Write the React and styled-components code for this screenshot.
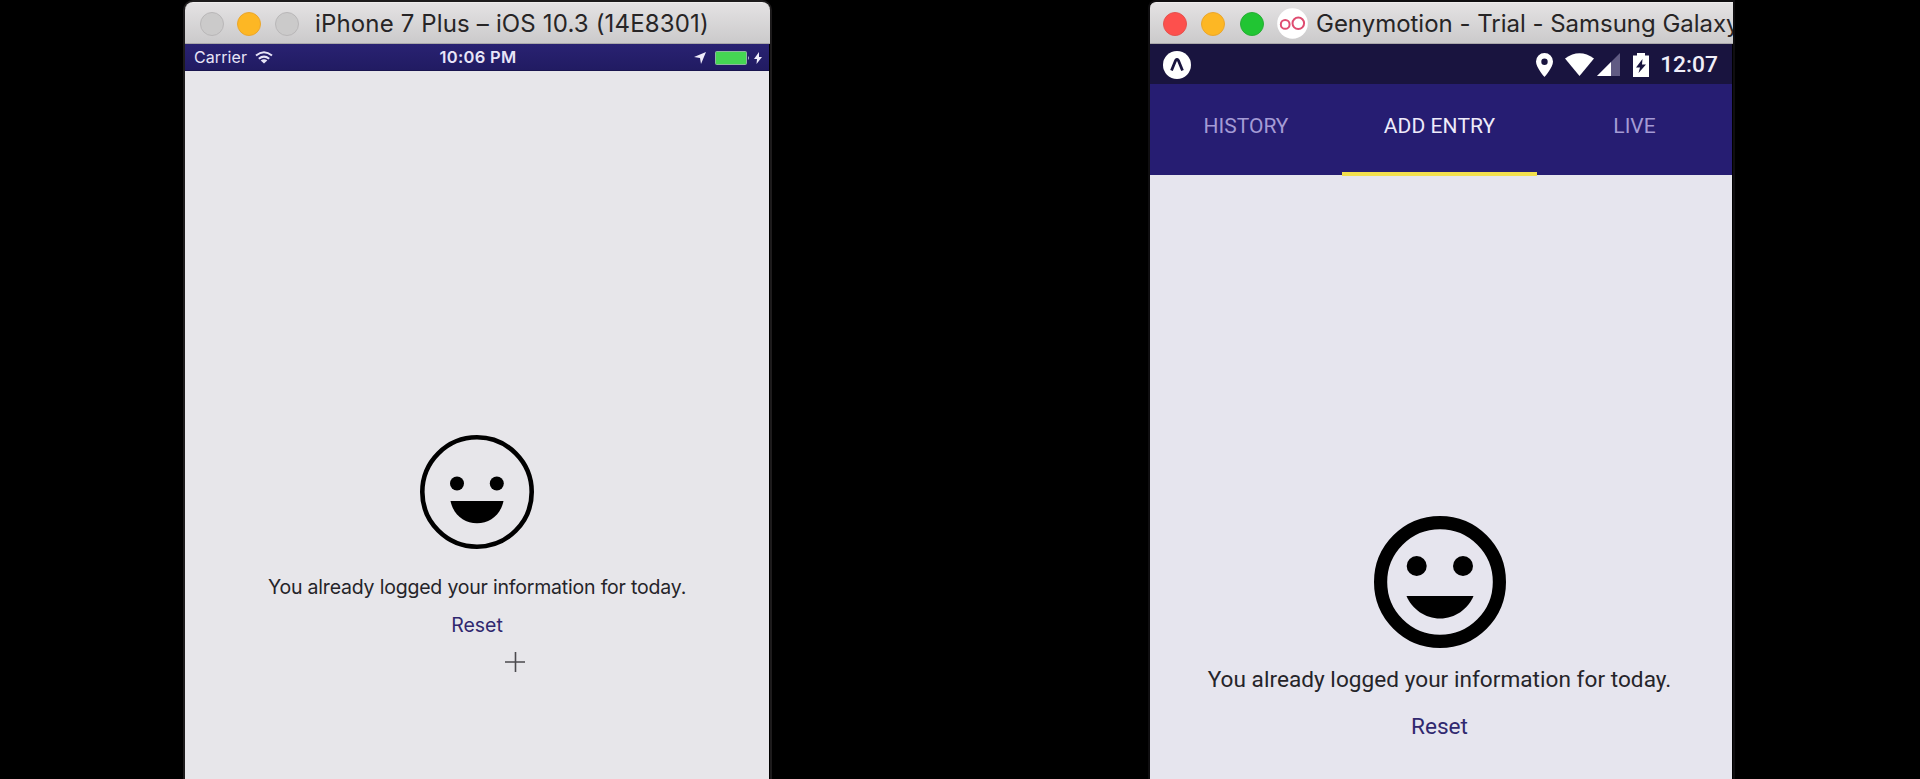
import React from "react";
import styled, { createGlobalStyle } from "styled-components";

const Global = createGlobalStyle`
  * { box-sizing: border-box; }
  html, body { margin: 0; background: #000; overflow: hidden; }
`;

const Desktop = styled.main`
  display: flex;
  align-items: stretch;
  gap: 380px;
  width: 1920px;
  height: 779px;
  padding: 2px 0 0 185px;
  overflow: hidden;
  background: #000;
`;

const Window = styled.section`
  display: flex;
  flex-direction: column;
  flex: none;
  width: ${(p) => p.$width}px;
  border-radius: ${(p) => p.$radius};
  font-family: ${(p) => p.$font};
  box-shadow: 0 0 0 2px ${(p) => p.$shadow};
`;

const TitleBar = styled.header`
  display: flex;
  align-items: center;
  flex: none;
  height: ${(p) => p.$height}px;
  padding-top: 1px;
  padding-left: ${(p) => p.$inset}px;
  border-top: 1px solid #eeecec;
  border-bottom: 1px solid #aaa8aa;
  border-radius: inherit;
  border-bottom-left-radius: 0;
  border-bottom-right-radius: 0;
  background: linear-gradient(#e4e2e3, #cbcacb);
  overflow: hidden;
`;

const Light = styled.span`
  flex: none;
  width: 24px;
  height: 24px;
  margin-right: ${(p) => p.$gap}px;
  border: 1px solid ${(p) => p.$edge};
  border-radius: 50%;
  background: ${(p) => p.$color};
`;

const Title = styled.h1`
  margin: 0 0 0 ${(p) => p.$left}px;
  font: 400 24px/40px Inter, sans-serif;
  letter-spacing: ${(p) => p.$spacing}px;
  white-space: nowrap;
  color: #272526;
`;

const IosStatus = styled.div`
  display: grid;
  grid-template-columns: 1fr auto 1fr;
  align-items: center;
  flex: none;
  width: 584px;
  height: 27px;
  padding: 0 7px 0 9px;
  border-bottom: 1px solid #19154f;
  background: linear-gradient(#292272, #211b62);
  color: #e8e5f8;
`;

const StatusGroup = styled.div`
  display: flex;
  align-items: center;
  justify-content: ${(p) => p.$justify};
`;

const StatusText = styled.span`
  font-size: ${(p) => p.$size}px;
  font-weight: ${(p) => p.$weight};
  letter-spacing: ${(p) => p.$spacing}px;
  line-height: 27px;
  white-space: nowrap;
`;

const Icon = styled.svg`
  display: block;
  flex: none;
  margin-left: ${(p) => p.$left || 0}px;
  overflow: visible;
`;

const Screen = styled.div`
  position: relative;
  display: flex;
  flex-direction: column;
  align-items: center;
  flex: 1;
  width: ${(p) => p.$width}px;
  padding-top: ${(p) => p.$top}px;
  padding-right: ${(p) => p.$right || 0}px;
  background: ${(p) => p.$color};
`;

const Message = styled.p`
  margin: ${(p) => p.$top}px 0 0;
  font-size: ${(p) => p.$size}px;
  letter-spacing: ${(p) => p.$spacing}px;
  line-height: 30px;
  white-space: nowrap;
  color: #252429;
`;

const Reset = styled.button`
  margin: ${(p) => p.$top}px 0 0;
  padding: 0;
  border: 0;
  background: none;
  font: inherit;
  font-size: ${(p) => p.$size}px;
  letter-spacing: ${(p) => p.$spacing}px;
  line-height: 30px;
  color: #30286f;
`;

const Cursor = styled.svg`
  position: absolute;
  left: 320px;
  top: 581px;
`;

const AndroidStatus = styled.div`
  display: flex;
  align-items: center;
  justify-content: space-between;
  flex: none;
  width: 582px;
  height: 40px;
  padding: 1px 14px 0 13px;
  background: #19143f;
  color: #f0eef8;
`;

const Tabs = styled.nav`
  position: relative;
  z-index: 1;
  display: grid;
  grid-template-columns: 192px 195px 195px;
  flex: none;
  width: 582px;
  height: 91px;
  background: #261d72;
`;

const Tab = styled.a`
  display: flex;
  justify-content: center;
  margin-bottom: -1px;
  padding-top: 27px;
  border-bottom: 4px solid ${(p) => (p.$active ? "#f3e04e" : "transparent")};
  font-size: 21px;
  line-height: 30px;
  letter-spacing: ${(p) => p.$spacing || 0}px;
  color: ${(p) => (p.$active ? "#eeebfa" : "#a49bd5")};
`;

const WifiArcs = () => (
  <Icon width="18" height="13" viewBox="0 0 18 13" $left={8} fill="none" stroke="#e8e5f8" strokeWidth="2">
    <path d="M1 4.6Q9-2 17 4.6M3.8 7.7Q9 3.5 14.2 7.7" />
    <path d="M9 12.6 5.7 9.6Q9 7 12.3 9.6Z" fill="#e8e5f8" stroke="none" />
  </Icon>
);

export default function App() {
  return (
    <>
      <Global />
      <Desktop>
        <Window $width={585} $radius="8px 8px 0 0" $font="Inter, sans-serif" $shadow="#1d1b1c">
          <TitleBar $height={42} $inset={15}>
            <Light $color="#cbcaca" $edge="#b9b7b8" $gap={13} />
            <Light $color="#fdb724" $edge="#eaa62d" $gap={14} />
            <Light $color="#cbcaca" $edge="#b9b7b8" $gap={0} />
            <Title $left={16} $spacing={0.15}>iPhone 7 Plus – iOS 10.3 (14E8301)</Title>
          </TitleBar>
          <IosStatus>
            <StatusGroup $justify="flex-start">
              <StatusText $size={16} $weight={400} $spacing={0.1}>Carrier</StatusText>
              <WifiArcs />
            </StatusGroup>
            <StatusText $size={16.5} $weight={600} $spacing={0.3}>10:06 PM</StatusText>
            <StatusGroup $justify="flex-end">
              <Icon width="12" height="12" viewBox="0 0 12 12">
                <path d="M12 0 7 12 6 6 0 5Z" fill="#f0edfb" />
              </Icon>
              <Icon width="35" height="14" viewBox="0 0 35 14" $left={9}>
                <rect x="0.5" y="0.5" width="31" height="13" rx="1" fill="#45d653" stroke="#8eb7a0" />
                <path d="M33 5q2 2 0 4Z" fill="#b8b2d6" />
              </Icon>
              <Icon width="8" height="12" viewBox="0 0 8 12" $left={4}>
                <path d="M5 0 0 7H3L2.5 12 8 5H5Z" fill="#f0edfb" />
              </Icon>
            </StatusGroup>
          </IosStatus>
          <Screen $width={584} $top={364} $color="#e7e6ea">
            <Icon width="114" height="114" viewBox="0 0 114 114">
              <circle cx="57" cy="57" r="54.7" fill="none" stroke="#000" strokeWidth="4.6" />
              <circle cx="37" cy="48.5" r="7" />
              <circle cx="76.8" cy="48.5" r="7" />
              <path d="M30.5 66H83.5C80.5 80 70 88.2 57 88.2S33.5 80 30.5 66Z" />
            </Icon>
            <Message $top={23} $size={19.5} $spacing={-0.2}>You already logged your information for today.</Message>
            <Reset $top={8} $size={19.5} $spacing={0}>Reset</Reset>
            <Cursor width="20" height="20" viewBox="0 0 20 20">
              <path d="M10.5 0V20M0 10H20" stroke="#4b4a4e" strokeWidth="1.6" />
            </Cursor>
          </Screen>
        </Window>

        <Window $width={583} $radius="6px 0 0 0" $font="Roboto, sans-serif" $shadow="#0f0e10">
          <TitleBar $height={42} $inset={13}>
            <Light $color="#fd504d" $edge="#e5524e" $gap={14} />
            <Light $color="#fdb724" $edge="#eaa62d" $gap={15} />
            <Light $color="#21c533" $edge="#27ae35" $gap={13} />
            <Icon width="31" height="31" viewBox="0 0 31 31">
              <circle cx="15.5" cy="15.5" r="15.3" fill="#fff" />
              <g fill="none" stroke="#df4c70" strokeWidth="2">
                <circle cx="8.2" cy="16.4" r="4.4" />
                <circle cx="21.3" cy="15.3" r="5.8" />
              </g>
            </Icon>
            <Title $left={8} $spacing={-0.02}>Genymotion - Trial - Samsung Galaxy</Title>
          </TitleBar>
          <AndroidStatus>
            <Icon width="28" height="28" viewBox="0 0 28 28">
              <circle cx="14" cy="14" r="14" fill="#fff" />
              <path d="m8.5 19.5 4.2-10.2Q14 7.7 15.3 9.3l4.2 10.2" fill="none" stroke="#19143f" strokeWidth="2.8" />
            </Icon>
            <StatusGroup $justify="flex-end">
              <Icon width="17" height="24" viewBox="0 0 17 24">
                <path fillRule="evenodd" d="M8.5 0A8.5 8.5 0 0 0 0 8.5C0 14.5 8.5 24 8.5 24S17 14.5 17 8.5A8.5 8.5 0 0 0 8.5 0Zm0 5.5a3.2 3.2 0 1 1 0 6.4 3.2 3.2 0 0 1 0-6.4Z" fill="#fff" />
              </Icon>
              <Icon width="29" height="23" viewBox="0 0 29 23" $left={12}>
                <path d="M0 5.5Q14.5-5 29 5.5L14.5 23Z" fill="#fff" />
              </Icon>
              <Icon width="23" height="23" viewBox="0 0 23 23" $left={3}>
                <path d="M23 0V23H0Z" fill="#615b83" />
                <path d="M14 9V23H0Z" fill="#fff" />
              </Icon>
              <Icon width="16" height="24" viewBox="0 0 16 24" $left={13}>
                <path d="M0 2.4H4V0h8v2.4h4V24H0Z" fill="#fff" />
                <path d="M9.5 6 3 14.5h4L5.5 20 13 11.5H9Z" fill="#19143f" />
              </Icon>
              <Icon as="span" $left={11}>
                <StatusText $size={22.8} $weight={500} $spacing={0}>12:07</StatusText>
              </Icon>
            </StatusGroup>
          </AndroidStatus>
          <Tabs>
            <Tab>HISTORY</Tab>
            <Tab $active $spacing={0.1}>ADD ENTRY</Tab>
            <Tab>LIVE</Tab>
          </Tabs>
          <Screen $width={582} $top={341} $right={3} $color="#e6e5ee">
            <Icon width="132" height="132" viewBox="0 0 132 132">
              <circle cx="66" cy="66" r="59.4" fill="none" stroke="#000" strokeWidth="13.2" />
              <circle cx="42.7" cy="50" r="10" />
              <circle cx="89" cy="50" r="10" />
              <path d="M32.5 80H99.5C94 93 81 102.5 66 102.5S38 93 32.5 80Z" />
            </Icon>
            <Message $top={17} $size={22.6} $spacing={0.03}>You already logged your information for today.</Message>
            <Reset $top={17} $size={22.6} $spacing={0}>Reset</Reset>
          </Screen>
        </Window>
      </Desktop>
    </>
  );
}
